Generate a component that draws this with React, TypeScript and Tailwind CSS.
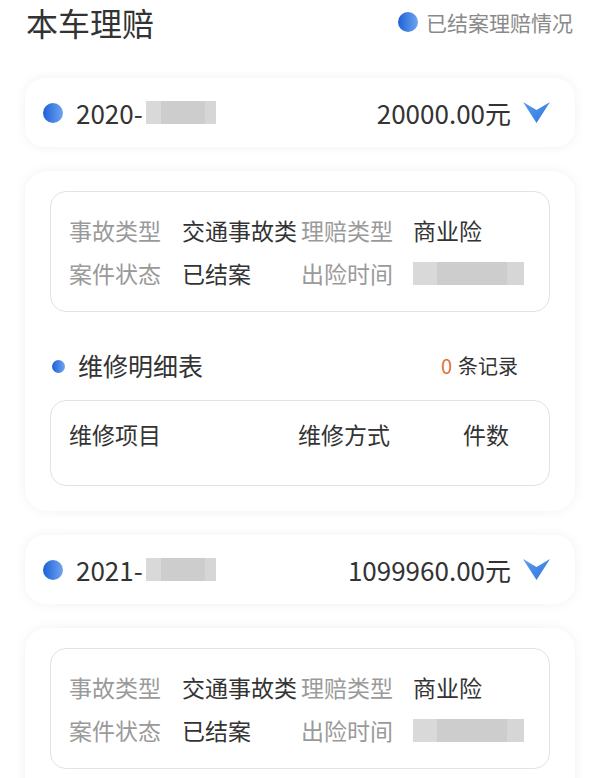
import React from 'react';

const font = { fontFamily: '"Noto Sans CJK SC", "Noto Sans", sans-serif' };

interface Claim {
  year: string;
  amount: string;
  accident: string;
  claimType: string;
  status: string;
}

const claims: Claim[] = [
  { year: '2020-', amount: '20000.00元', accident: '交通事故类', claimType: '商业险', status: '已结案' },
  { year: '2021-', amount: '1099960.00元', accident: '交通事故类', claimType: '商业险', status: '已结案' },
];

const Dot: React.FC<{ size: string }> = ({ size }) => (
  <span className={`${size} shrink-0 rounded-full bg-gradient-to-r from-[#1d5fd6] to-[#6ea4f0]`} />
);

const Chevron = () => (
  <svg width="27" height="21" viewBox="0 0 27 21">
    <defs>
      <linearGradient id="chev" x1="0" y1="0" x2="1" y2="1">
        <stop offset="0" stopColor="#5b9df2" />
        <stop offset="1" stopColor="#2f74dd" />
      </linearGradient>
    </defs>
    <path d="M0 0 L13.5 8 L27 0 L13.5 21 Z" fill="url(#chev)" />
  </svg>
);

const Blur: React.FC<{ w: string }> = ({ w }) => (
  <span className={`${w} h-[23px] flex`}>
    <span className="w-[22%] bg-[#d9d9d9]" />
    <span className="flex-1 bg-[#cdcdcd]" />
    <span className="w-[15%] bg-[#d6d6d6]" />
  </span>
);

const ClaimHeader: React.FC<{ claim: Claim }> = ({ claim }) => (
  <div className="h-[69px] rounded-[20px] bg-white shadow-[0_0_12px_rgba(0,0,0,0.06)] flex items-center pl-[18px] pr-[25px]">
    <Dot size="w-[20px] h-[20px]" />
    <span className="ml-[13px] text-[26px] leading-[30px] text-[#333]">{claim.year}</span>
    <span className="ml-[3px] flex">
      <Blur w="w-[70px]" />
    </span>
    <span className="ml-auto text-[26px] leading-[30px] text-[#333]">{claim.amount}</span>
    <span className="ml-[12px] flex items-center">
      <Chevron />
    </span>
  </div>
);

const ClaimDetail: React.FC<{ claim: Claim }> = ({ claim }) => (
  <div className="rounded-[22px] bg-white shadow-[0_0_12px_rgba(0,0,0,0.06)] pt-[20px] pb-[25px] px-[25px]">
    <div className="rounded-[16px] border border-[#e2e2e2] pl-[18px] pt-[23px] pb-[23px] grid grid-cols-[113px_119px_112px_1fr] gap-y-[13px] text-[23px] leading-[30px]">
      <span className="text-[#9a9a9a]">事故类型</span>
      <span className="text-[#333] whitespace-nowrap">{claim.accident}</span>
      <span className="text-[#9a9a9a]">理赔类型</span>
      <span className="text-[#333]">{claim.claimType}</span>
      <span className="text-[#9a9a9a]">案件状态</span>
      <span className="text-[#333]">{claim.status}</span>
      <span className="text-[#9a9a9a]">出险时间</span>
      <span className="flex items-center">
        <Blur w="w-[111px]" />
      </span>
    </div>

    <div className="mt-[39px] h-[30px] flex items-center pl-[2px] pr-[32px]">
      <Dot size="w-[13px] h-[13px]" />
      <span className="ml-[13px] text-[25px] text-[#333]">维修明细表</span>
      <span className="ml-auto text-[20px] text-[#333]">
        <span className="text-[#e0703a] mr-[6px]">0</span>条记录
      </span>
    </div>

    <div className="mt-[19px] rounded-[16px] border border-[#e2e2e2] pl-[18px] pt-[18px] pb-[36px] grid grid-cols-[229px_165px_1fr] text-[23px] leading-[30px] text-[#333]">
      <span>维修项目</span>
      <span>维修方式</span>
      <span>件数</span>
    </div>
  </div>
);

export default function App() {
  return (
    <div style={font} className="w-[600px] h-[778px] overflow-hidden bg-white">
      <div className="flex items-center justify-between pl-[26px] pr-[27px] pt-[1px] h-[42px]">
        <h1 className="text-[32px] leading-[40px] text-[#333]">本车理赔</h1>
        <div className="flex items-center">
          <Dot size="w-[20px] h-[20px]" />
          <span className="ml-[8px] text-[21px] leading-[30px] text-[#8a8a8a]">已结案理赔情况</span>
        </div>
      </div>

      <div className="mt-[36px] px-[25px] flex flex-col gap-[24px]">
        {claims.map((c) => (
          <React.Fragment key={c.year}>
            <ClaimHeader claim={c} />
            <ClaimDetail claim={c} />
          </React.Fragment>
        ))}
      </div>
    </div>
  );
}
